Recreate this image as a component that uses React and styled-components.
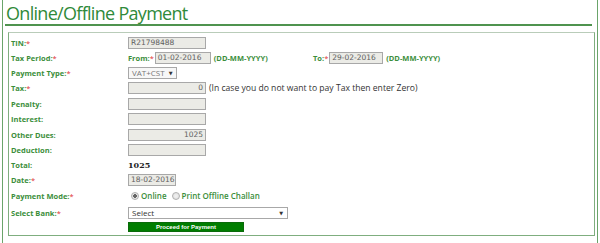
import React from 'react';
import styled, { createGlobalStyle } from 'styled-components';

const GlobalStyle = createGlobalStyle`
    html, body {
        margin: 0;
        padding: 0;
        background: #ffffff;
    }
    body {
        font-family: "Open Sans", "DejaVu Sans", sans-serif;
    }
`;

const green = '#3b8e3b';

const Page = styled.div`
    margin: 0 2px;
    height: 243px;
    border-left: 1px solid #6aa46a;
    border-right: 1px solid #6aa46a;
    box-sizing: border-box;
`;

const Title = styled.h1`
    margin: 0;
    padding: 2px 0 0 3px;
    height: 22px;
    font-size: 18px;
    line-height: 22px;
    font-weight: 400;
    color: #2f8a3a;
    letter-spacing: -0.7px;
`;

const Rule = styled.div`
    height: 2px;
    margin: 0 5px 6px 2px;
    background: #4f934f;
`;

const Box = styled.div`
    margin: 0 2px 0 5px;
    height: 204px;
    box-sizing: border-box;
    border: 1px solid #7fae7f;
    border-top-color: #b9ccb9;
    padding: 2px 0 0 2px;
`;

const Row = styled.div`
    display: flex;
    align-items: center;
    height: ${props => props.h || 15}px;
`;

const Label = styled.div`
    width: 117px;
    font-size: 7.5px;
    font-weight: 700;
    color: ${green};
`;

const Star = styled.span`
    color: #e03030;
    font-weight: 400;
`;

const Cell = styled.div`
    display: flex;
    align-items: center;
    white-space: nowrap;
    width: ${props => (props.w ? `${props.w}px` : 'auto')};
`;

const Field = styled.div`
    width: ${props => props.w || 78}px;
    height: 12px;
    box-sizing: border-box;
    border: 1px solid #a8a8a8;
    background: #ebebe6;
    color: #606060;
    line-height: 10px;
    padding: 0 2px;
    white-space: nowrap;
    overflow: hidden;
    text-align: ${props => (props.right ? 'right' : 'left')};
    font-family: "DejaVu Sans", sans-serif;
    font-size: 7.5px;
`;

const Inline = styled.span`
    color: ${green};
    font-weight: 700;
    font-size: 7.5px;
    margin: ${props => props.m || '0'};
`;

const Hint = styled.span`
    color: #333;
    font-size: 8.6px;
    margin-left: 3px;
`;

const DropBox = styled.div`
    width: ${props => props.w}px;
    height: 12px;
    box-sizing: border-box;
    border: 1px solid #a8a8a8;
    background: ${props => props.bg || '#fff'};
    color: ${props => props.fg || '#333'};
    font-size: 8px;
    line-height: 10px;
    padding: 0 4px 0 3px;
    display: flex;
    justify-content: ${props => (props.spread ? 'space-between' : 'flex-start')};
    align-items: center;
    gap: 4px;
`;

const Arrow = styled.span`
    font-size: 5px;
    color: #333;
`;

const Total = styled.span`
    font-size: 8px;
    font-weight: 700;
    color: #222;
    font-family: "DejaVu Serif", serif;
`;

const Radio = styled.span`
    width: 6px;
    height: 6px;
    border-radius: 50%;
    border: 1px solid #b0b0b0;
    background: radial-gradient(circle, ${props => (props.on ? '#666 0, #666 1.6px, #e6e6e6 2px' : '#f2f2f2 0, #dcdcdc 100%')});
    margin: 0 2px 0 ${props => props.ml || 0}px;
`;

const RadioText = styled.span`
    color: ${green};
    font-size: 8px;
    font-weight: 600;
`;

const Button = styled.div`
    width: 116px;
    height: 10px;
    box-sizing: border-box;
    background: #007d00;
    border: 1px solid #0a6a0a;
    color: #fff;
    font-family: "Liberation Sans", Arial, sans-serif;
    font-weight: 700;
    font-size: 6px;
    line-height: 8px;
    text-align: center;
`;

const L = ({ text, req }) => (
    <Label>
        {text}
        {req && <Star>*</Star>}
    </Label>
);

const App = () => (
    <>
        <GlobalStyle />
        <Page>
            <Title>Online/Offline Payment</Title>
            <Rule />
            <Box>
                <Row>
                    <L text="TIN:" req />
                    <Field>R21798488</Field>
                </Row>
                <Row>
                    <L text="Tax Period:" req />
                    <Cell w={185}>
                        <Inline m="0 1px 0 0">From:<Star>*</Star></Inline>
                        <Field w={56}>01-02-2016</Field>
                        <Inline m="0 0 0 3px">(DD-MM-YYYY)</Inline>
                    </Cell>
                    <Cell>
                        <Inline m="0 1px 0 0">To:<Star>*</Star></Inline>
                        <Field w={54}>29-02-2016</Field>
                        <Inline m="0 0 0 3px">(DD-MM-YYYY)</Inline>
                    </Cell>
                </Row>
                <Row>
                    <L text="Payment Type:" req />
                    <DropBox w={49} bg="#f7f7f7" fg="#777">
                        VAT+CST <Arrow>▼</Arrow>
                    </DropBox>
                </Row>
                <Row h={16}>
                    <L text="Tax:" req />
                    <Cell>
                        <Field right>0</Field>
                        <Hint>(In case you do not want to pay Tax then enter Zero)</Hint>
                    </Cell>
                </Row>
                <Row>
                    <L text="Penalty:" />
                    <Field />
                </Row>
                <Row h={16}>
                    <L text="Interest:" />
                    <Field />
                </Row>
                <Row>
                    <L text="Other Dues:" />
                    <Field right>1025</Field>
                </Row>
                <Row>
                    <L text="Deduction:" />
                    <Field />
                </Row>
                <Row>
                    <L text="Total:" />
                    <Total>1025</Total>
                </Row>
                <Row>
                    <L text="Date:" req />
                    <Field w={48}>18-02-2016</Field>
                </Row>
                <Row h={17}>
                    <L text="Payment Mode:" req />
                    <Cell>
                        <Radio on ml={3} />
                        <RadioText>Online</RadioText>
                        <Radio ml={5} />
                        <RadioText>Print Offline Challan</RadioText>
                    </Cell>
                </Row>
                <Row h={17}>
                    <L text="Select Bank:" req />
                    <DropBox w={160} spread>
                        Select <Arrow>▼</Arrow>
                    </DropBox>
                </Row>
                <Row h={12}>
                    <Label />
                    <Button>Proceed for Payment</Button>
                </Row>
            </Box>
        </Page>
    </>
);

export default App;
